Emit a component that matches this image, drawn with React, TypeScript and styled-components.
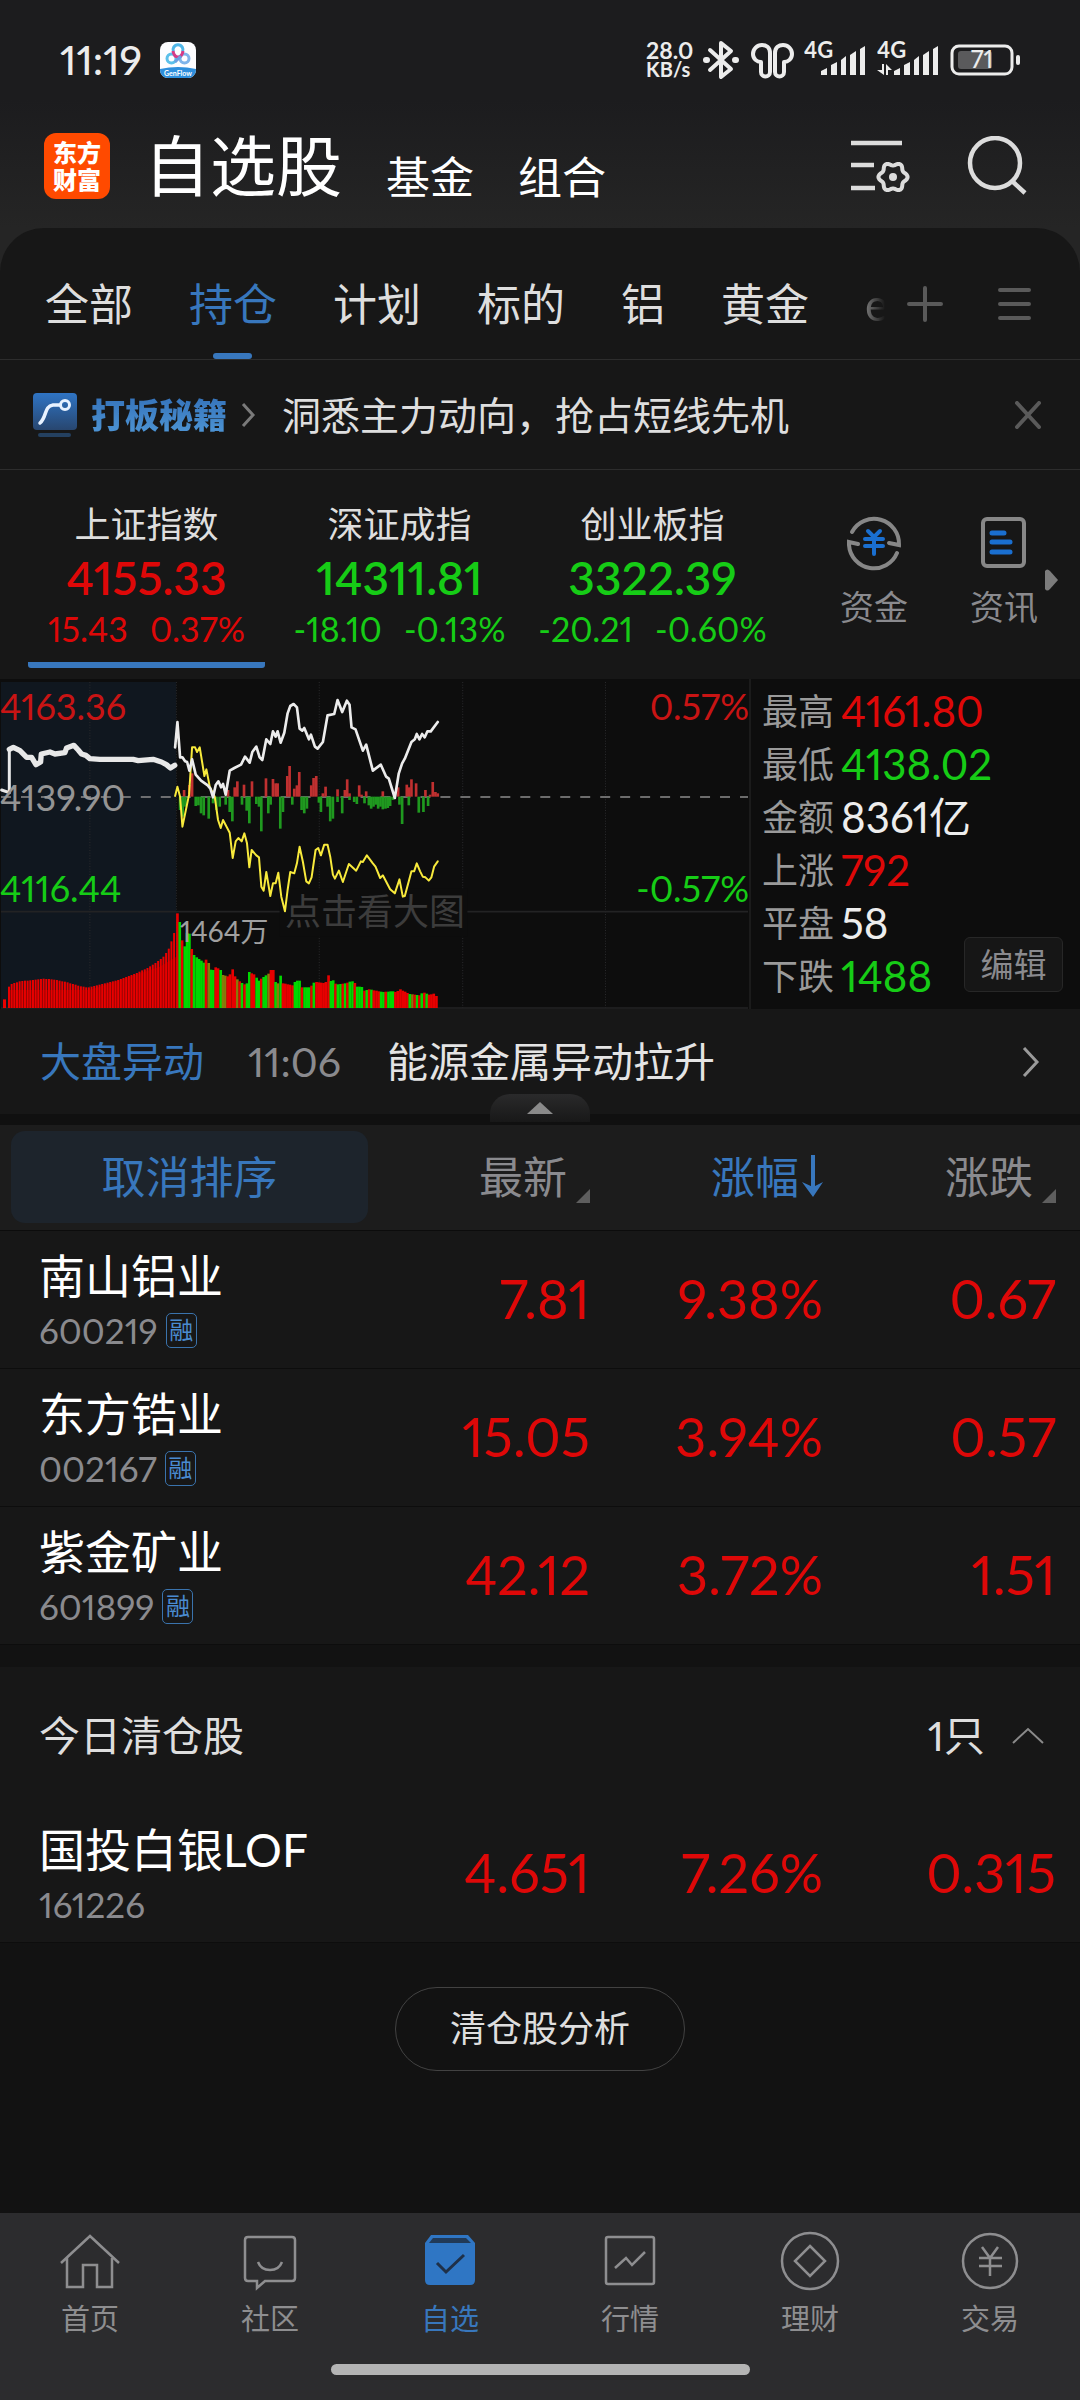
import React from "react";
import styled, { createGlobalStyle, css } from "styled-components";

const color = {
  page: "#121212",
  sheet: "#171717",
  line: "#2d2d2d",
  text: "#dedede",
  muted: "#8a8a8e",
  dim: "#5a5a5a",
  blue: "#3877bd",
  red: "#de0808",
  green: "#16cc16",
};

const GlobalStyle = createGlobalStyle`
  *, *::before, *::after { box-sizing: border-box; }
  body {
    margin: 0;
    background: ${color.page};
    color: ${color.text};
    font-family: Lato, "Noto Sans CJK SC", sans-serif;
    font-variant-numeric: proportional-nums;
    line-height: 1.2;
  }
  button {
    margin: 0;
    padding: 0;
    border: 0;
    background: none;
    color: inherit;
    font: inherit;
    font-variant-numeric: inherit;
    cursor: pointer;
  }
  a { color: inherit; text-decoration: none; }
  svg { display: block; flex: none; }
`;

type Tone = "up" | "down" | "flat";
const toneColor = (t: Tone) => (t === "up" ? color.red : t === "down" ? color.green : "#ededed");

const Page = styled.div`
  display: flex;
  flex-direction: column;
  min-height: 100vh;
`;

/* ---------- status bar ---------- */

const Top = styled.div`
  background: linear-gradient(#1c1c1e 0, #1c1c1e 100px, #252525 228px);
`;

const StatusBar = styled.div`
  display: flex;
  align-items: center;
  justify-content: space-between;
  height: 120px;
  padding: 0 60px;
`;

const StatusGroup = styled.div<{ $gap: number }>`
  display: flex;
  align-items: center;
  gap: ${(p) => p.$gap}px;
`;

const Clock = styled.time`
  font-size: 41px;
  font-weight: 500;
  line-height: 48px;
  color: #ececec;
`;

const Speed = styled.span`
  display: flex;
  flex-direction: column;
  align-items: flex-start;
  width: 47px;
  font-size: 23px;
  font-weight: 700;
  line-height: 19px;
  color: #ececec;
  white-space: nowrap;
  small { font-size: 20px; }
`;

/* ---------- header ---------- */

const Header = styled.header`
  display: flex;
  align-items: center;
  height: 108px;
  padding: 0 52px 16px 44px;
`;

const Logo = styled.span`
  display: grid;
  place-content: center;
  width: 66px;
  height: 66px;
  border-radius: 12px;
  background: #ff4a00;
  color: #fff;
  font-size: 24px;
  font-weight: 900;
  line-height: 27px;
  text-align: center;
`;

const HeaderTabs = styled.nav`
  display: flex;
  align-items: flex-end;
  gap: 44px;
  margin-left: 34px;
  flex: 1;
`;

const HeaderTab = styled.a<{ $main?: boolean }>`
  color: #fff;
  white-space: nowrap;
  font-size: ${(p) => (p.$main ? 66 : 44)}px;
  line-height: ${(p) => (p.$main ? 80 : 58)}px;
`;

const HeaderActions = styled.div`
  display: flex;
  gap: 56px;
  color: #dcdcdc;
`;

/* ---------- sheet: groups and banner ---------- */

const Sheet = styled.main`
  border-radius: 44px 44px 0 0;
  background: ${color.sheet};
`;

const GroupBar = styled.div`
  display: flex;
  align-items: center;
  height: 132px;
  padding-right: 47px;
  border-bottom: 1px solid ${color.line};
`;

const Groups = styled.nav`
  display: flex;
  gap: 56px;
  align-self: stretch;
  flex: 1;
  min-width: 0;
  overflow: hidden;
  padding-left: 45px;
`;

const Group = styled.a<{ $active?: boolean; $fading?: boolean }>`
  position: relative;
  flex: none;
  padding-top: 48px;
  font-size: 44px;
  line-height: 56px;
  color: ${(p) => (p.$active ? color.blue : color.text)};
  ${(p) =>
    p.$active &&
    css`
      &::after {
        content: "";
        position: absolute;
        left: 50%;
        bottom: 0;
        width: 39px;
        height: 6px;
        margin-left: -20px;
        border-radius: 3px;
        background: ${color.blue};
      }
    `}
  ${(p) =>
    p.$fading &&
    css`
      mask-image: linear-gradient(to right, rgba(0, 0, 0, 0.5), transparent 20px);
    `}
`;

const GroupActions = styled.div`
  display: flex;
  gap: 54px;
  padding-top: 20px;
  color: ${color.dim};
`;

const Banner = styled.div`
  display: flex;
  align-items: center;
  justify-content: space-between;
  height: 110px;
  padding: 0 39px 0 33px;
  border-bottom: 1px solid ${color.line};
  color: ${color.dim};
`;

const BannerLink = styled.a`
  display: flex;
  align-items: center;
  gap: 14px;
`;

const BannerTitle = styled.strong`
  font-size: 34px;
  font-weight: 900;
  line-height: 44px;
  background: linear-gradient(#3370b8, #4f97d6);
  background-clip: text;
  color: transparent;
`;

const BannerText = styled.span`
  margin-left: 12px;
  font-size: 39px;
  line-height: 48px;
  color: ${color.text};
`;

/* ---------- indices ---------- */

const IndexBar = styled.section`
  position: relative;
  display: grid;
  grid-template-columns: 759fr 301fr;
  height: 209px;
  padding-left: 20px;
`;

const Indices = styled.div`
  display: grid;
  grid-template-columns: repeat(3, 1fr);
`;

const IndexCard = styled.button<{ $active?: boolean }>`
  display: flex;
  flex-direction: column;
  align-items: center;
  margin: 0 8px 11px;
  padding-top: 30px;
  border-bottom: 6px solid transparent;
  white-space: nowrap;
  ${(p) =>
    p.$active &&
    css`
      background: linear-gradient(${color.blue}, ${color.blue}) bottom / 100% 6px no-repeat border-box;
      border-radius: 3px;
    `}
`;

const IndexName = styled.span`
  font-size: 36px;
  line-height: 48px;
`;

const IndexValue = styled.span<{ $tone: Tone }>`
  font-size: 46px;
  font-weight: 600;
  line-height: 60px;
  color: ${(p) => toneColor(p.$tone)};
`;

const IndexChange = styled.span<{ $tone: Tone }>`
  display: flex;
  gap: 22px;
  font-size: 34px;
  line-height: 42px;
  color: ${(p) => toneColor(p.$tone)};
`;

const Shortcuts = styled.div`
  display: grid;
  grid-template-columns: 1fr 1fr;
  padding: 41px 11px 0 30px;
`;

const Shortcut = styled.a`
  display: flex;
  flex-direction: column;
  align-items: center;
  gap: 14px;
  font-size: 34px;
  line-height: 44px;
  color: ${color.muted};
`;

const MoreArrow = styled.span`
  position: absolute;
  right: 22px;
  top: 99px;
`;

/* ---------- chart ---------- */

const Market = styled.section`
  display: flex;
  height: 330px;
  background: #0d0d0d;
`;

const ChartBox = styled.a`
  position: relative;
  flex: 1;
  border-right: 2px solid #1b1b1b;
`;

const ChartSvg = styled.svg`
  width: 100%;
  height: 330px;
`;

const ChartLabel = styled.span<{ $x: "left" | "right"; $y: number; $c: string }>`
  position: absolute;
  ${(p) => p.$x}: 0;
  top: ${(p) => p.$y}px;
  font-size: 36px;
  line-height: 44px;
  color: ${(p) => p.$c};
`;

const VolumeLabel = styled.span`
  position: absolute;
  left: 180px;
  top: 234px;
  font-size: 28px;
  line-height: 36px;
  color: #a0a0a0;
`;

const ChartHint = styled.span`
  position: absolute;
  left: 285px;
  top: 208px;
  font-size: 36px;
  line-height: 48px;
  color: #3c3c3c;
`;

const Stats = styled.dl`
  position: relative;
  width: 329px;
  margin: 0;
  padding: 6px 0 0 11px;
`;

const Stat = styled.div<{ $tone: Tone }>`
  display: flex;
  align-items: center;
  gap: 7px;
  height: 53px;
  dt { font-size: 36px; color: #9a9a9a; }
  dd { margin: 0; font-size: 42px; color: ${(p) => toneColor(p.$tone)}; }
`;

const EditButton = styled.button`
  position: absolute;
  right: 17px;
  bottom: 17px;
  width: 99px;
  height: 55px;
  border: 1px solid #272727;
  border-radius: 6px;
  background: #161616;
  font-size: 33px;
  color: ${color.muted};
`;

/* ---------- alert row ---------- */

const Alert = styled.a`
  position: relative;
  display: flex;
  align-items: center;
  height: 105px;
  padding: 0 40px;
  font-size: 41px;
  line-height: 52px;
`;

const AlertName = styled.span`
  color: ${color.blue};
`;

const AlertTime = styled.time`
  margin: 0 46px 0 44px;
  color: ${color.muted};
`;

const AlertText = styled.span`
  flex: 1;
  color: #e4e4e4;
`;

const Divider = styled.div`
  display: flex;
  justify-content: center;
  align-items: flex-end;
  height: 11px;
  background: #101010;
`;

const Handle = styled.button`
  position: relative;
  display: grid;
  place-items: center;
  width: 100px;
  height: 28px;
  margin-bottom: 3px;
  border-radius: 20px 20px 0 0;
  background: linear-gradient(#2a2a2b, #181818);
`;

/* ---------- quotes ---------- */

const Quotes = styled.table`
  width: 100%;
  table-layout: fixed;
  border-collapse: collapse;
  background: ${color.sheet};
`;

const HeadCell = styled.th<{ $w?: number; $last?: boolean }>`
  width: ${(p) => (p.$w ? `${p.$w}px` : "auto")};
  height: 105px;
  padding: 0 ${(p) => (p.$last ? 24 : 0)}px 0 0;
  background: #1c1c1c;
  border-bottom: 1px solid #0c0c0c;
  text-align: right;
  font-weight: 400;
`;

const CancelSort = styled.button`
  display: block;
  width: calc(100% - 22px);
  height: 92px;
  margin-left: 11px;
  border-radius: 14px;
  background: #1d242c;
  font-size: 44px;
  color: ${color.blue};
`;

const SortButton = styled.button<{ $active?: boolean }>`
  display: inline-flex;
  align-items: flex-end;
  gap: ${(p) => (p.$active ? 3 : 9)}px;
  font-size: 44px;
  line-height: 56px;
  vertical-align: middle;
  color: ${(p) => (p.$active ? color.blue : color.muted)};
`;

const StockCell = styled.th`
  height: 138px;
  padding: 0 0 2px 39px;
  border-bottom: 1px solid #0d0d0d;
  text-align: left;
  font-weight: 400;
`;

const StockName = styled.span`
  display: block;
  margin-bottom: 8px;
  font-size: 46px;
  line-height: 56px;
  color: #fff;
  white-space: nowrap;
`;

const StockCode = styled.span`
  display: flex;
  align-items: center;
  gap: 8px;
  height: 36px;
  font-size: 35px;
  line-height: 36px;
  color: ${color.muted};
`;

const MarginBadge = styled.span`
  width: 31px;
  height: 35px;
  border: 1px solid #3a73ad;
  border-radius: 5px;
  font-size: 24px;
  line-height: 32px;
  text-align: center;
  color: #4a8bd0;
`;

const NumCell = styled.td<{ $w: number; $last?: boolean }>`
  width: ${(p) => p.$w}px;
  padding: 0 ${(p) => (p.$last ? 24 : 0)}px 0 0;
  border-bottom: 1px solid #0d0d0d;
  text-align: right;
  font-size: 54px;
  line-height: 64px;
  color: ${color.red};
`;

const Cleared = styled.section`
  margin-top: 22px;
  background: ${color.sheet};
`;

const ClearedHead = styled.header`
  display: flex;
  align-items: center;
  justify-content: space-between;
  height: 138px;
  padding: 0 36px 0 39px;
`;

const ClearedTitle = styled.h2`
  margin: 0;
  font-size: 41px;
  font-weight: 400;
`;

const ClearedToggle = styled.button`
  display: flex;
  align-items: center;
  gap: 27px;
  font-size: 41px;
`;

const Analyse = styled.button`
  align-self: center;
  width: 290px;
  height: 84px;
  margin: 44px 0;
  border: 1px solid #424242;
  border-radius: 42px;
  font-size: 36px;
`;

/* ---------- bottom navigation ---------- */

const BottomNav = styled.nav`
  display: grid;
  grid-template-columns: repeat(6, 1fr);
  height: 187px;
  margin-top: auto;
  padding-top: 18px;
  background: #2c2c2e;
`;

const NavItem = styled.a<{ $active?: boolean }>`
  display: flex;
  flex-direction: column;
  align-items: center;
  gap: 8px;
  font-size: 29px;
  line-height: 40px;
  color: ${(p) => (p.$active ? color.blue : "#8e8e90")};
`;

const HomeBar = styled.span`
  grid-column: 1 / -1;
  justify-self: center;
  width: 419px;
  height: 11px;
  border-radius: 6px;
  background: #b4b4b4;
`;

/* ---------- icons ---------- */

const NetDiskIcon = () => (
  <svg width="36" height="36" viewBox="0 0 36 36">
    <defs>
      <clipPath id="tile"><rect width="36" height="36" rx="8" /></clipPath>
    </defs>
    <g clipPath="url(#tile)">
      <rect width="36" height="36" fill="#fdfdff" />
      <path d="M0 27Q18 23 36 27V36H0Z" fill="#2f8fdc" />
      <g fill="none" strokeWidth="3">
        <path d="M13.500 10a5 5 0 1 1 9 0" stroke="#4fb6e8" />
        <circle cx="11.500" cy="16.500" r="4.500" stroke="#5cc0ea" />
        <circle cx="24.500" cy="16.500" r="4.500" stroke="#7fb4ea" />
        <path d="M13 9q1 6 5 6t5-6" stroke="#d63b86" />
        <path d="M15 20L21 14" stroke="#6a9fe0" />
      </g>
      <text x="18" y="34" textAnchor="middle" fontSize="7" fontWeight="700" fill="#fff">GenFlow</text>
    </g>
  </svg>
);

const BluetoothIcon = () => (
  <svg width="38" height="40" viewBox="0 0 38 40" fill="none" stroke="#ececec" strokeWidth="4" strokeLinejoin="round" strokeLinecap="round">
    <path d="M8 10L29 29L19 37V3L29 11L8 30" />
    <path d="M4 20h1M33 20h1" strokeWidth="6" />
  </svg>
);

const EarbudsIcon = () => (
  <svg width="46" height="40" viewBox="0 0 46 40" fill="none" stroke="#ececec" strokeWidth="4" strokeLinejoin="round">
    <path d="M21 13C21 7 17 5 13 5C8 5 4 9 4 14C4 19 8 22 12 22V32C12 38 21 38 21 32Z" />
    <path d="M26 13C26 7 30 5 34 5C39 5 43 9 43 14C43 19 39 22 35 22V32C35 38 26 38 26 32Z" />
  </svg>
);

const SignalIcon = ({ data }: { data?: boolean }) => (
  <svg width="64" height="52" viewBox="0 -6 64 52" fill="#ececec">
    <text x="0" y="18" fontSize="22" fontWeight="700">4G</text>
    <path d="M17 35V31L23 28V35ZM27 35V25L33 22V35ZM37 35V20L42 16V35ZM46 35V15L52 11V35ZM56 35V9L61 6V35Z" />
    {data && <path d="M5 24h2v11L0 30h5ZM9 35V24l6 6h-4v5Z" />}
  </svg>
);

const BatteryIcon = () => (
  <svg width="70" height="40" viewBox="0 0 70 40">
    <rect x="2" y="6" width="60" height="28" rx="7" fill="none" stroke="#ececec" strokeWidth="3" />
    <rect x="8" y="11" width="34" height="18" rx="3" fill="#5a5a5c" />
    <rect x="66" y="15" width="4" height="10" rx="2" fill="#ececec" />
    <text x="32" y="28" textAnchor="middle" fontSize="24" fontWeight="500" fill="#ececec">71</text>
  </svg>
);

const gearPath =
  Array.from({ length: 72 }, (_, i) => {
    const a = (i * Math.PI) / 36;
    const r = 13 + 1.6 * Math.cos(6 * a);
    return `${i ? "L" : "M"}${(43 + r * Math.cos(a)).toFixed(1)} ${(41 + r * Math.sin(a)).toFixed(1)}`;
  }).join("") + "Z";

const ListSettingsIcon = () => (
  <svg width="60" height="60" viewBox="0 0 60 60" fill="none" stroke="currentColor" strokeWidth="4.500">
    <path d="M1 7H52M1 29H24M1 52H25" />
    <path strokeLinejoin="round" strokeWidth="4" d={gearPath} />
    <circle cx="43" cy="41" r="4" fill="currentColor" stroke="none" />
  </svg>
);

const SearchIcon = () => (
  <svg width="62" height="60" viewBox="0 0 62 60" fill="none" stroke="currentColor" strokeWidth="4.500">
    <ellipse cx="29" cy="27" rx="25" ry="25" />
    <path d="M46 45L59 57" />
  </svg>
);

const PlusIcon = () => (
  <svg width="36" height="36" viewBox="0 0 36 36" stroke="currentColor" strokeWidth="4" strokeLinecap="round">
    <path d="M18 2V34M2 18H34" />
  </svg>
);

const MenuIcon = () => (
  <svg width="36" height="36" viewBox="0 0 36 36" stroke="currentColor" strokeWidth="4" strokeLinecap="round">
    <path d="M3 4H32M3 18H32M3 32H32" />
  </svg>
);

const CurveIcon = () => (
  <svg width="44" height="44" viewBox="0 0 44 44">
    <defs>
      <linearGradient id="curve" x2="0" y2="1">
        <stop stopColor="#2f74c4" />
        <stop offset="1" stopColor="#28466f" />
      </linearGradient>
    </defs>
    <rect width="44" height="37" rx="4" fill="url(#curve)" />
    <rect x="5" y="40" width="33" height="4" rx="2" fill="#24405f" />
    <path d="M7 30C14 24 11 13 20 12H27" fill="none" stroke="#e8f2ff" strokeWidth="3.500" strokeLinecap="round" />
    <circle cx="32" cy="12" r="4.500" fill="none" stroke="#e8f2ff" strokeWidth="3" />
  </svg>
);

const Chevron = ({ w, h, d, s, c }: { w: number; h: number; d: string; s: number; c: string }) => (
  <svg width={w} height={h} viewBox={`0 0 ${w} ${h}`} fill="none" stroke={c} strokeWidth={s}>
    <path d={d} />
  </svg>
);

const CloseIcon = () => (
  <svg width="26" height="28" viewBox="0 0 26 28" stroke="currentColor" strokeWidth="4" strokeLinecap="round">
    <path d="M2 2L24 26M24 2L2 26" />
  </svg>
);

const FundsIcon = () => (
  <svg width="60" height="60" viewBox="0 0 60 60" fill="none" stroke="#878787" strokeWidth="4" strokeLinecap="round">
    <path d="M8 21A25 25 0 0 1 55 34L45 32" />
    <path d="M53 42A25 25 0 0 1 5 34V31L14 33" />
    <path d="M24 20L30 26L36 20M21 28H39M21 35H39M30 27V43" stroke="#1a6fd0" />
  </svg>
);

const NewsIcon = () => (
  <svg width="60" height="60" viewBox="0 0 60 60" fill="none" strokeWidth="4" strokeLinecap="round">
    <rect x="9" y="8" width="41" height="47" rx="4" stroke="#878787" />
    <path d="M18 22H30M18 31H36M18 41H36" stroke="#1a6fd0" strokeWidth="5" />
  </svg>
);

const Corner = () => (
  <svg width="14" height="16" viewBox="0 0 14 16"><path d="M14 0V14H0Z" fill="#5e5e5e" /></svg>
);

const DownArrow = () => (
  <svg width="21" height="56" viewBox="0 0 21 56">
    <path d="M11 6V40" stroke="currentColor" strokeWidth="4" />
    <path d="M0 33L11 38L21 33L11 48Z" fill="currentColor" />
  </svg>
);

const NavIcon = ({ name }: { name: string }) => (
  <svg width="60" height="60" viewBox="0 0 60 60" fill="none" stroke="currentColor" strokeWidth="2.500">
    {name === "首页" && <path d="M1 32L30 5L59 32M7 27V56H23V34H37V56H52V27" />}
    {name === "社区" && (
      <>
        <path d="M8 6H52Q55 6 55 9V47Q55 50 52 50H25L17 57V50H8Q5 50 5 47V9Q5 6 8 6Z" />
        <path d="M18 31Q21 39 30 39Q39 39 42 31" />
      </>
    )}
    {name === "自选" && (
      <>
        <path d="M11 4H48L55 12V49Q55 54 50 54H10Q5 54 5 49V12Z" fill="#2f76c4" stroke="none" />
        <path d="M13 7H46L51 12H9Z" fill="#213a58" stroke="none" />
        <path d="M17 32L26 41L44 24" stroke="#1f3048" strokeWidth="3" />
      </>
    )}
    {name === "行情" && (
      <>
        <rect x="6" y="6" width="48" height="47" rx="2" />
        <path d="M15 37L26 27L32 34L45 21" />
      </>
    )}
    {name === "理财" && (
      <>
        <circle cx="30" cy="30" r="28" />
        <path d="M30 15L45 30L30 45L15 30Z" />
      </>
    )}
    {name === "交易" && (
      <>
        <circle cx="30" cy="30" r="27" />
        <path d="M22 16L30 27L38 16M19 27H42M19 35H42M30 27V45" />
      </>
    )}
  </svg>
);

/* ---------- chart data (viewBox units, three to a pixel) ---------- */

const preOpen =
  "28,238 40,232 60,242 80,262 95,262 108,284 122,276 124,252 150,246 165,252 195,248 200,234 222,226 235,240 245,252 258,256 270,266 300,268 400,268 415,272 460,268 485,276 500,284 512,294 525,286";
const priceLine =
  "526,232 533,156 541,262 548,262 556,274 562,276 569,302 577,268 588,314 604,332 624,346 632,356 640,382 648,345 656,334 664,352 670,342 678,374 690,302 704,294 724,284 736,260 750,278 758,246 770,230 780,262 788,270 800,208 812,222 820,184 828,200 834,184 843,218 854,188 864,130 872,108 882,102 892,112 900,176 908,182 914,174 928,208 934,194 946,230 954,236 970,216 984,136 1004,132 1014,90 1028,126 1042,92 1050,104 1056,172 1068,178 1090,242 1100,224 1120,302 1144,284 1160,320 1168,326 1186,384 1198,310 1208,280 1216,266 1236,216 1246,208 1252,192 1260,208 1268,192 1276,202 1284,184 1294,184 1315,156";
const averageLine =
  "526,378 533,350 541,380 548,470 558,422 568,374 577,232 586,232 592,246 600,232 614,318 620,298 630,350 645,380 655,450 663,474 670,450 690,488 699,564 708,514 716,504 726,514 734,490 742,520 749,592 756,540 770,556 778,562 785,650 792,662 800,606 812,678 820,640 828,640 836,608 845,680 856,724 864,660 872,606 884,610 892,580 900,530 910,576 920,634 928,640 936,622 948,540 956,534 964,556 974,524 984,524 992,560 1000,614 1006,626 1018,602 1030,636 1048,582 1070,602 1084,574 1090,576 1102,556 1120,580 1128,590 1142,624 1150,616 1172,658 1186,670 1200,628 1210,680 1216,678 1228,634 1236,604 1244,604 1252,580 1262,604 1270,620 1278,622 1288,632 1296,622 1304,590 1315,574";

const buying = [
  [553, 360], [569, 345], [577, 310], [685, 360], [705, 352], [713, 334], [733, 344], [757, 334], [799, 325], [820, 327],
  [828, 340], [834, 340], [863, 318], [870, 288], [884, 356], [892, 346], [899, 306], [935, 346], [942, 324], [950, 318],
  [970, 370], [978, 350], [1014, 358], [1036, 360], [1043, 328], [1050, 370], [1079, 346], [1086, 374], [1100, 364],
  [1150, 364], [1196, 352], [1222, 344], [1229, 352], [1236, 328], [1250, 340], [1278, 360], [1292, 374], [1300, 336],
  [1308, 366], [1315, 370],
];
const selling = [
  [541, 420], [549, 440], [557, 410], [588, 408], [596, 406], [604, 430], [612, 436], [627, 446], [640, 400], [650, 420],
  [660, 410], [678, 404], [690, 426], [698, 454], [727, 404], [741, 422], [749, 460], [770, 402], [778, 410], [785, 484],
  [806, 430], [813, 404], [842, 476], [850, 426], [878, 404], [906, 420], [914, 430], [922, 416], [958, 398], [964, 426],
  [984, 410], [992, 454], [1000, 446], [1014, 396], [1028, 430], [1050, 390], [1064, 396], [1072, 402], [1095, 400],
  [1108, 406], [1115, 416], [1122, 410], [1129, 404], [1136, 416], [1143, 410], [1150, 418], [1158, 416], [1165, 414],
  [1172, 408], [1180, 390], [1200, 404], [1208, 462], [1228, 406], [1258, 428], [1272, 426], [1286, 408],
];

const preVolume = [
  [28, 950], [36, 942], [60, 934], [100, 930], [130, 926], [160, 928], [200, 936], [240, 948], [265, 953], [300, 944],
  [350, 932], [400, 914], [440, 896], [470, 878], [492, 860], [505, 842], [513, 826], [521, 795], [528, 780],
];
const volume = [
  [533, 730], [541, 760], [548, 820], [556, 830], [563, 782], [570, 792], [577, 845], [585, 858], [600, 868], [612, 878],
  [620, 868], [628, 880], [636, 905], [648, 892], [662, 898], [670, 915], [687, 920], [699, 898], [707, 922], [722, 936],
  [736, 944], [742, 940], [749, 906], [764, 914], [778, 932], [790, 922], [806, 912], [814, 900], [822, 900], [829, 942],
  [836, 940], [842, 914], [850, 940], [880, 946], [888, 932], [900, 932], [907, 952], [932, 952], [945, 935], [978, 940],
  [985, 910], [993, 934], [1000, 930], [1010, 944], [1040, 940], [1050, 935], [1064, 934], [1071, 950], [1086, 950],
  [1095, 962], [1110, 958], [1130, 962], [1150, 966], [1180, 964], [1190, 966], [1203, 958], [1215, 964], [1230, 972],
  [1260, 976], [1272, 966], [1280, 970], [1290, 974], [1306, 970], [1316, 986],
];
const volumeSides =
  "rgrgggrgggggroggrrgoorrrrorgrggrrggrggorrgogrrrrrgggrgggrgrrrrrrggrggrgrggrgggrgrgrrrggrgggrrrrrrgorgrgrgrrrr";

const FLOOR = 1014;
const ZERO = 380;
const fills: Record<string, string> = { r: "#e80000", g: "#00d800", o: "#8a7a0a" };

function levelAt(points: number[][], x: number) {
  const next = points.findIndex((p) => p[0] >= x);
  if (next <= 0) return points[next < 0 ? points.length - 1 : 0][1];
  const [x0, y0] = points[next - 1];
  const [x1, y1] = points[next];
  return Math.round(y0 + ((y1 - y0) * (x - x0)) / (x1 - x0));
}

const preBars = Array.from({ length: 63 }, (_, i) => 28 + i * 8);
const dayBars = [...volumeSides].map((side, i) => ({ side, x: Math.round(533 + i * 7.2) }));

const Chart = () => (
  <ChartSvg viewBox="0 27 2250 990" preserveAspectRatio="none" aria-hidden="true">
    <rect x="3" y="36" width="526" height="978" fill="#10171f" />
    <g stroke="#2a2a2c" strokeWidth="3" strokeDasharray="3 5">
      {[270, 530, 959, 1390, 1819].map((x) => <path key={x} d={`M${x} 36V1014`} />)}
    </g>
    <path d="M3 725H2247M3 1014H2247" stroke="#232324" strokeWidth="5" />
    <rect x="840" y="656" width="564" height="144" fill="#0d0d0d" />
    <path d="M3 381H2247" stroke="#8c8c8c" strokeWidth="5" strokeDasharray="30 30" />
    <g fill="#c03030">
      {buying.map(([x, y]) => <rect key={x} x={x - 4} y={y} width="8" height={ZERO - y} />)}
    </g>
    <g fill="#1f991f">
      {selling.map(([x, y]) => <rect key={x} x={x - 4} y={ZERO} width="8" height={y - ZERO} />)}
    </g>
    <rect x="9" y="988" width="9" height="26" fill={fills.r} />
    <path d={`M24 ${FLOOR}V960L270 960L480 890L530 860V${FLOOR}Z`} fill="#6c0606" />
    {preBars.map((x) => {
      const y = levelAt(preVolume, x);
      return <rect key={x} x={x - 4} y={y} width="6" height={FLOOR - y} fill={fills.r} />;
    })}
    {dayBars.map(({ side, x }) => {
      const y = levelAt(volume, x);
      return <rect key={x} x={x - 4} y={y} width="8" height={FLOOR - y} fill={fills[side]} />;
    })}
    <g fill="none" strokeLinejoin="round" strokeLinecap="round">
      <polyline points={averageLine} stroke="#f8ea3c" strokeWidth="6" />
      <polyline points="5,360 28,368 28,238" stroke="#e8e8e8" strokeWidth="9" />
      <polyline points={preOpen} stroke="#e8e8e8" strokeWidth="16" />
      <polyline points={priceLine} stroke="#ececec" strokeWidth="8" />
    </g>
  </ChartSvg>
);

/* ---------- content ---------- */

const indices: { name: string; value: string; diff: string; pct: string; tone: Tone }[] = [
  { name: "上证指数", value: "4155.33", diff: "15.43", pct: "0.37%", tone: "up" },
  { name: "深证成指", value: "14311.81", diff: "-18.10", pct: "-0.13%", tone: "down" },
  { name: "创业板指", value: "3322.39", diff: "-20.21", pct: "-0.60%", tone: "down" },
];

const stats: [string, string, Tone][] = [
  ["最高", "4161.80", "up"],
  ["最低", "4138.02", "down"],
  ["金额", "8361亿", "flat"],
  ["上涨", "792", "up"],
  ["平盘", "58", "flat"],
  ["下跌", "1488", "down"],
];

type Stock = { name: string; code: string; margin?: boolean; cells: [string, string, string] };
const holdings: Stock[] = [
  { name: "南山铝业", code: "600219", margin: true, cells: ["7.81", "9.38%", "0.67"] },
  { name: "东方锆业", code: "002167", margin: true, cells: ["15.05", "3.94%", "0.57"] },
  { name: "紫金矿业", code: "601899", margin: true, cells: ["42.12", "3.72%", "1.51"] },
];
const cleared: Stock[] = [{ name: "国投白银LOF", code: "161226", cells: ["4.651", "7.26%", "0.315"] }];

const columns = [211, 233, 257];

const StockRow = ({ stock }: { stock: Stock }) => (
  <tr>
    <StockCell scope="row">
      <StockName>{stock.name}</StockName>
      <StockCode>
        {stock.code}
        {stock.margin && <MarginBadge>融</MarginBadge>}
      </StockCode>
    </StockCell>
    {stock.cells.map((v, i) => (
      <NumCell key={i} $w={columns[i]} $last={i === 2}>{v}</NumCell>
    ))}
  </tr>
);

export default function App() {
  return (
    <Page>
      <GlobalStyle />
      <Top>
        <StatusBar>
          <StatusGroup $gap={18}>
            <Clock>11:19</Clock>
            <NetDiskIcon />
          </StatusGroup>
          <StatusGroup $gap={9}>
            <Speed>28.0<small>KB/s</small></Speed>
            <BluetoothIcon />
            <EarbudsIcon />
            <SignalIcon />
            <SignalIcon data />
            <BatteryIcon />
          </StatusGroup>
        </StatusBar>
        <Header>
          <Logo>东方<br />财富</Logo>
          <HeaderTabs>
            <HeaderTab href="#watch" $main>自选股</HeaderTab>
            <HeaderTab href="#funds">基金</HeaderTab>
            <HeaderTab href="#portfolio">组合</HeaderTab>
          </HeaderTabs>
          <HeaderActions>
            <button aria-label="设置"><ListSettingsIcon /></button>
            <button aria-label="搜索"><SearchIcon /></button>
          </HeaderActions>
        </Header>

        <Sheet>
          <GroupBar>
            <Groups>
              <Group href="#all">全部</Group>
              <Group href="#hold" $active>持仓</Group>
              <Group href="#plan">计划</Group>
              <Group href="#target">标的</Group>
              <Group href="#al">铝</Group>
              <Group href="#gold">黄金</Group>
              <Group href="#e" $fading>e</Group>
            </Groups>
            <GroupActions>
              <button aria-label="添加分组"><PlusIcon /></button>
              <button aria-label="管理分组"><MenuIcon /></button>
            </GroupActions>
          </GroupBar>

          <Banner>
            <BannerLink href="#tips">
              <CurveIcon />
              <BannerTitle>打板秘籍</BannerTitle>
              <Chevron w={15} h={26} d="M2 2L12 13L2 24" s={3} c="#7a7a7a" />
              <BannerText>洞悉主力动向，抢占短线先机</BannerText>
            </BannerLink>
            <button aria-label="关闭"><CloseIcon /></button>
          </Banner>

          <IndexBar>
            <Indices>
              {indices.map((it, i) => (
                <IndexCard key={it.name} $active={i === 0}>
                  <IndexName>{it.name}</IndexName>
                  <IndexValue $tone={it.tone}>{it.value}</IndexValue>
                  <IndexChange $tone={it.tone}>
                    <span>{it.diff}</span>
                    <span>{it.pct}</span>
                  </IndexChange>
                </IndexCard>
              ))}
            </Indices>
            <Shortcuts>
              <Shortcut href="#money"><FundsIcon />资金</Shortcut>
              <Shortcut href="#news"><NewsIcon />资讯</Shortcut>
            </Shortcuts>
            <MoreArrow>
              <svg width="13" height="22" viewBox="0 0 13 22">
                <path d="M0 2Q2-1 5 2L13 11L5 20Q2 23 0 20Z" fill="#7c7c7c" />
              </svg>
            </MoreArrow>
          </IndexBar>

          <Market>
            <ChartBox href="#chart">
              <Chart />
              <ChartLabel $x="left" $y={5} $c="#c81414">4163.36</ChartLabel>
              <ChartLabel $x="left" $y={96} $c="#949494">4139.90</ChartLabel>
              <ChartLabel $x="left" $y={187} $c={color.green}>4116.44</ChartLabel>
              <ChartLabel $x="right" $y={5} $c="#c81414">0.57%</ChartLabel>
              <ChartLabel $x="right" $y={187} $c={color.green}>-0.57%</ChartLabel>
              <VolumeLabel>1464万</VolumeLabel>
              <ChartHint>点击看大图</ChartHint>
            </ChartBox>
            <Stats>
              {stats.map(([label, value, tone]) => (
                <Stat key={label} $tone={tone}>
                  <dt>{label}</dt>
                  <dd>{value}</dd>
                </Stat>
              ))}
              <EditButton>编辑</EditButton>
            </Stats>
          </Market>

          <Alert href="#alert">
            <AlertName>大盘异动</AlertName>
            <AlertTime>11:06</AlertTime>
            <AlertText>能源金属异动拉升</AlertText>
            <Chevron w={18} h={32} d="M2 2L15 16L2 30" s={3} c="#9a9a9a" />
          </Alert>
          <Divider>
            <Handle aria-label="收起">
              <svg width="26" height="12" viewBox="0 0 26 12"><path d="M13 0L26 12H0Z" fill="#8a8a8a" /></svg>
            </Handle>
          </Divider>
        </Sheet>
      </Top>

      <Quotes>
        <thead>
          <tr>
            <HeadCell scope="col"><CancelSort>取消排序</CancelSort></HeadCell>
            <HeadCell scope="col" $w={columns[0]}><SortButton>最新<Corner /></SortButton></HeadCell>
            <HeadCell scope="col" $w={columns[1]}><SortButton $active>涨幅<DownArrow /></SortButton></HeadCell>
            <HeadCell scope="col" $w={columns[2]} $last><SortButton>涨跌<Corner /></SortButton></HeadCell>
          </tr>
        </thead>
        <tbody>
          {holdings.map((s) => <StockRow key={s.code} stock={s} />)}
        </tbody>
      </Quotes>

      <Cleared>
        <ClearedHead>
          <ClearedTitle>今日清仓股</ClearedTitle>
          <ClearedToggle>
            1只
            <Chevron w={32} h={18} d="M1 16L16 2L31 16" s={2} c="#8a8a8a" />
          </ClearedToggle>
        </ClearedHead>
        <Quotes>
          <tbody>
            {cleared.map((s) => <StockRow key={s.code} stock={s} />)}
          </tbody>
        </Quotes>
      </Cleared>

      <Analyse>清仓股分析</Analyse>

      <BottomNav>
        {["首页", "社区", "自选", "行情", "理财", "交易"].map((name) => (
          <NavItem key={name} href={`#${name}`} $active={name === "自选"}>
            <NavIcon name={name} />
            {name}
          </NavItem>
        ))}
        <HomeBar />
      </BottomNav>
    </Page>
  );
}
